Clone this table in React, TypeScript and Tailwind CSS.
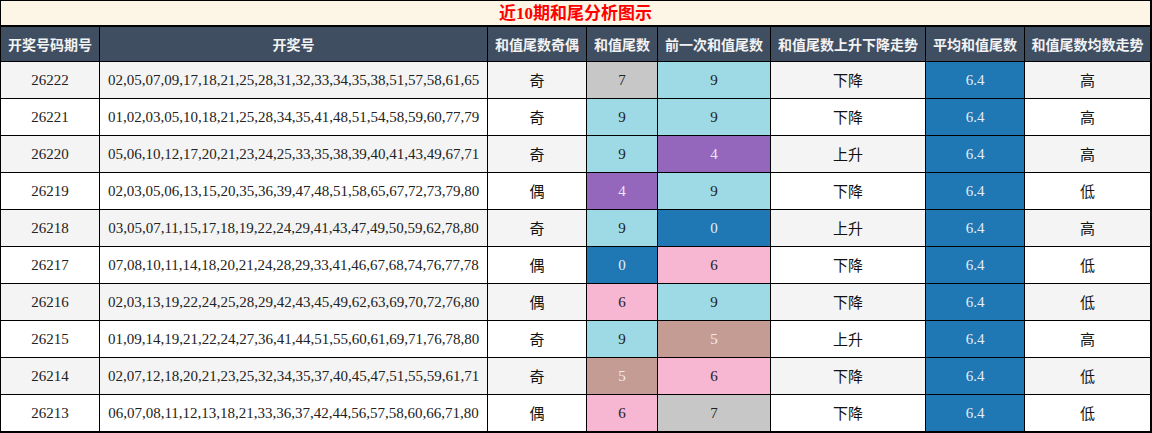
const rows = [
  ["26222", "02,05,07,09,17,18,21,25,28,31,32,33,34,35,38,51,57,58,61,65", "奇", 7, 9, "下降", "高"],
  ["26221", "01,02,03,05,10,18,21,25,28,34,35,41,48,51,54,58,59,60,77,79", "奇", 9, 9, "下降", "高"],
  ["26220", "05,06,10,12,17,20,21,23,24,25,33,35,38,39,40,41,43,49,67,71", "奇", 9, 4, "上升", "高"],
  ["26219", "02,03,05,06,13,15,20,35,36,39,47,48,51,58,65,67,72,73,79,80", "偶", 4, 9, "下降", "低"],
  ["26218", "03,05,07,11,15,17,18,19,22,24,29,41,43,47,49,50,59,62,78,80", "奇", 9, 0, "上升", "高"],
  ["26217", "07,08,10,11,14,18,20,21,24,28,29,33,41,46,67,68,74,76,77,78", "偶", 0, 6, "下降", "低"],
  ["26216", "02,03,13,19,22,24,25,28,29,42,43,45,49,62,63,69,70,72,76,80", "偶", 6, 9, "下降", "低"],
  ["26215", "01,09,14,19,21,22,24,27,36,41,44,51,55,60,61,69,71,76,78,80", "奇", 9, 5, "上升", "高"],
  ["26214", "02,07,12,18,20,21,23,25,32,34,35,37,40,45,47,51,55,59,61,71", "奇", 5, 6, "下降", "低"],
  ["26213", "06,07,08,11,12,13,18,21,33,36,37,42,44,56,57,58,60,66,71,80", "偶", 6, 7, "下降", "低"],
] as const;

const headers = [
  "开奖号码期号",
  "开奖号",
  "和值尾数奇偶",
  "和值尾数",
  "前一次和值尾数",
  "和值尾数上升下降走势",
  "平均和值尾数",
  "和值尾数均数走势",
];

// tail digit -> cell colour (tab20 palette)
const tailColor: Record<number, string> = {
  0: "bg-[#1f77b4] text-[#e6eef6]",
  4: "bg-[#9467bd] text-[#eee6f4]",
  5: "bg-[#c49c94] text-[#f4ece9]",
  6: "bg-[#f7b6d2] text-[#222]",
  7: "bg-[#c7c7c7] text-[#222]",
  9: "bg-[#9edae5] text-[#222]",
};

const cell = "flex items-center justify-center border-r border-b border-black";

export default function App() {
  return (
    <div className="w-[1152px] h-[433px] bg-white font-['Liberation_Serif','Noto_Sans_CJK_SC',serif]">
      <div className="border border-black">
        <div className="h-[26px] flex items-center justify-center bg-[#fdf5e6] border-r border-b-2 border-black text-[17px] font-bold text-[#ff0000] leading-none">
          近10期和尾分析图示
        </div>
        <div className="grid grid-cols-[99px_388px_99px_71px_113px_155px_99px_126px]">
          {headers.map((h) => (
            <div
              key={h}
              className={`${cell} h-[35px] bg-[#404e62] text-[#f2f2f2] text-[14px] font-bold font-['Noto_Sans_CJK_SC',sans-serif]`}
            >
              {h}
            </div>
          ))}
          {rows.map((r, i) => {
            const bg = i % 2 === 0 ? "bg-[#f4f4f4]" : "bg-white";
            return [
              <div key={r[0] + "a"} className={`${cell} ${bg} h-[37px] text-[15px] text-[#222]`}>{r[0]}</div>,
              <div key={r[0] + "b"} className={`${cell} ${bg} text-[15px] text-[#222]`}>{r[1]}</div>,
              <div key={r[0] + "c"} className={`${cell} ${bg} text-[15px] text-[#111] font-['Noto_Sans_CJK_SC',sans-serif]`}>{r[2]}</div>,
              <div key={r[0] + "d"} className={`${cell} ${tailColor[r[3]]} text-[15px]`}>{r[3]}</div>,
              <div key={r[0] + "e"} className={`${cell} ${tailColor[r[4]]} text-[15px]`}>{r[4]}</div>,
              <div key={r[0] + "f"} className={`${cell} ${bg} text-[15px] text-[#111] font-['Noto_Sans_CJK_SC',sans-serif]`}>{r[5]}</div>,
              <div key={r[0] + "g"} className={`${cell} bg-[#1f77b4] text-[15px] text-[#e6eef6]`}>6.4</div>,
              <div key={r[0] + "h"} className={`${cell} ${bg} text-[15px] text-[#111] font-['Noto_Sans_CJK_SC',sans-serif]`}>{r[6]}</div>,
            ];
          })}
        </div>
      </div>
    </div>
  );
}
